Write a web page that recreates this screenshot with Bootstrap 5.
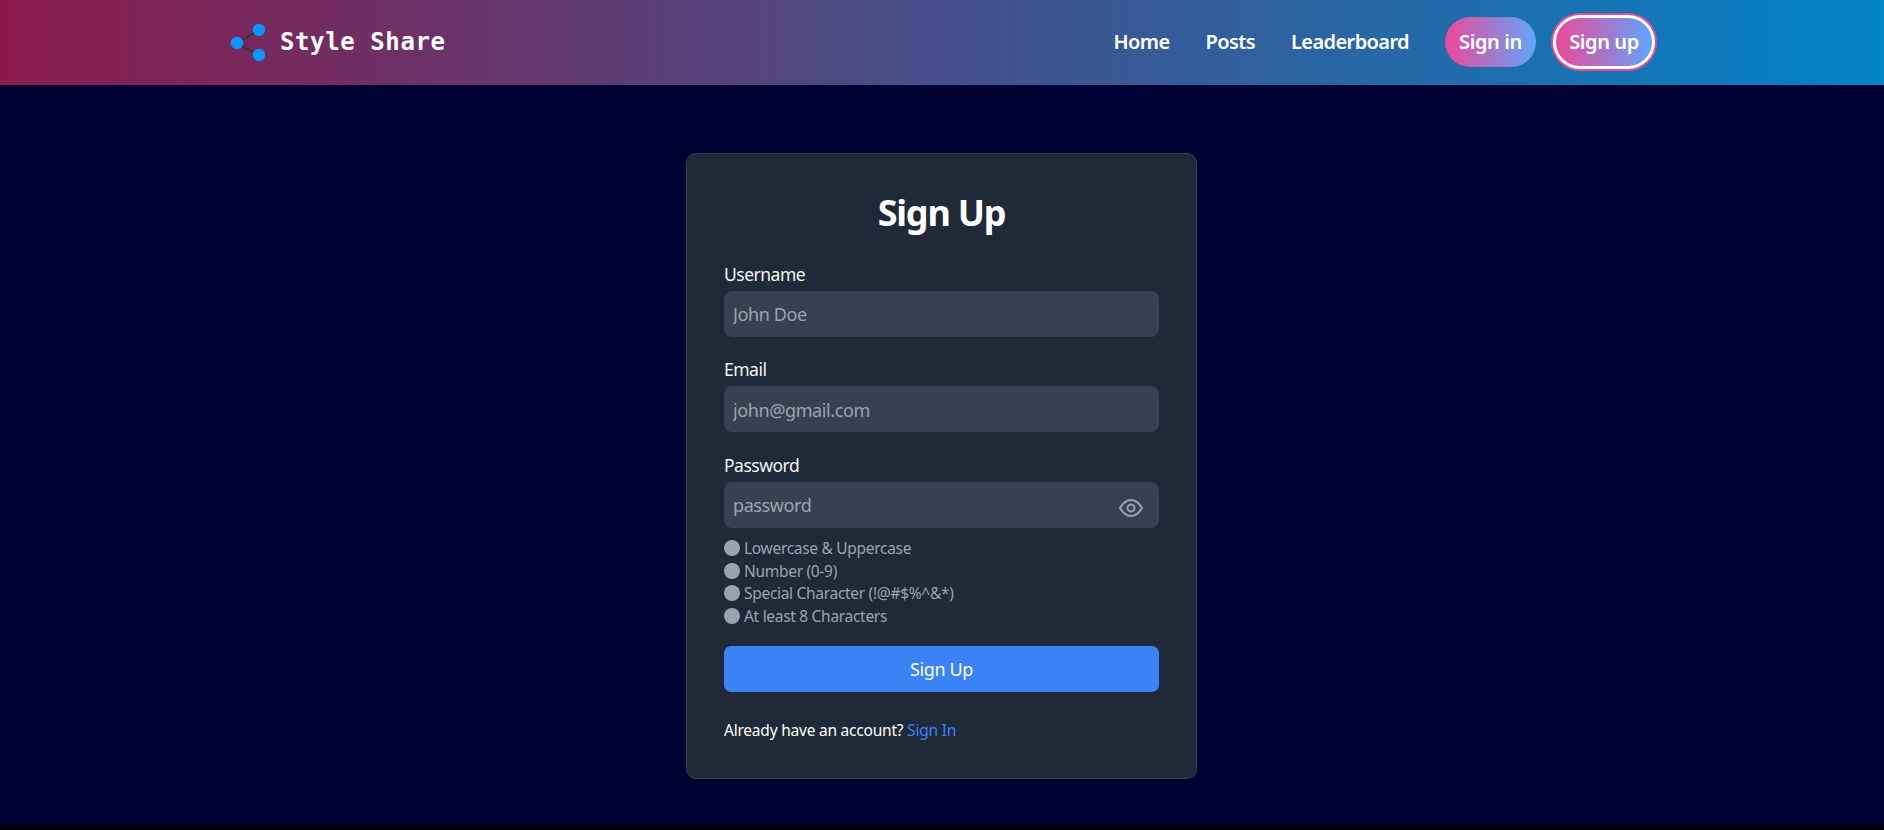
<!DOCTYPE html>
<html lang="en">
<head>
  <meta charset="UTF-8"/>
  <meta name="viewport" content="width=device-width, initial-scale=1.0"/>
  <title>Style Share - Sign Up</title>
  <link rel="stylesheet" href="https://cdn.jsdelivr.net/npm/bootstrap@5.3.0/dist/css/bootstrap.min.css"/>
  <style>
    html, body { background: #000; }
    body { font-family: "Noto Sans", "Liberation Sans", sans-serif; color: #fff; }
    .page-wrap { background: #000033; height: 825px; }
    .top-bar { height: 85px; padding: 0; background: linear-gradient(90deg, #8a1a4c, #0284c7); }
    .top-inner { width: 1430px; margin: 0 auto; padding-bottom: 2px; }
    .brand-link { color: #fff; text-decoration: none; font-family: "DejaVu Sans Mono", monospace; font-weight: 700; font-size: 24px; letter-spacing: .6px; gap: 10px; }
    .brand-link:hover { color: #fff; }
    .link-group { gap: 36px; margin-right: 36px; }
    .pill-group { gap: 17px; margin-right: 2px; }
    .top-link { color: #fff; text-decoration: none; font-size: 20px; font-weight: 600; letter-spacing: -.6px; }
    .pill-btn { color: #fff; text-decoration: none; font-size: 20px; font-weight: 600; letter-spacing: -.4px; border-radius: 25px; background: linear-gradient(90deg, #ec4899, #60a5fa); display: flex; align-items: center; justify-content: center; }
    .pill-in { width: 91px; height: 50px; }
    .pill-up { width: 102px; height: 54px; border: 3px solid #fff; border-radius: 29px; box-shadow: 0 0 0 2px #ec4899; }
    .form-area { padding: 68px 1px 0 0; }
    .form-box { width: 511px; background: #1f2937; border: 1px solid #374151; border-radius: 10px; padding: 32px 37px 35px; }
    .form-box h1 { font-size: 36px; font-weight: 700; letter-spacing: -1.2px; line-height: 54px; margin-bottom: 21.5px; }
    .field-label { font-size: 17.5px; letter-spacing: -.5px; line-height: 25px; margin-bottom: 4px; color: #f3f4f6; }
    .field-input { height: 46px; background: #374151; border: 0; border-radius: 8px; color: #fff; font-size: 18px; letter-spacing: -.4px; padding: 1px 9px 0; }
    .field-input::placeholder { color: #9ca3af; }
    .field-input:focus { background: #374151; color: #fff; box-shadow: none; }
    .field-gap { margin-bottom: 20.5px; }
    .pass-gap { margin-bottom: 9.5px; }
    .rule-list { margin-bottom: 19px; }
    .eye-btn { position: absolute; right: 16px; top: 15px; line-height: 0; }
    .rule-row { font-size: 15.5px; letter-spacing: -.3px; line-height: 22.6px; color: #9ca3af; gap: 4px; }
    .rule-dot { width: 16px; height: 16px; background: #9ca3af; border-radius: 50%; }
    .go-btn { height: 46px; background: #3b82f6; border: 0; border-radius: 7px; color: #fff; font-size: 18px; letter-spacing: -.4px; }
    .go-btn:hover { background: #3b82f6; color: #fff; }
    .foot-line { font-size: 15.5px; letter-spacing: -.22px; line-height: 24px; margin: 26px 0 .5px; }
    .foot-line a { color: #3b82f6; text-decoration: none; }
  </style>
</head>
<body>
  <div class="page-wrap">
    <nav class="navbar top-bar">
      <div class="top-inner d-flex align-items-center justify-content-between">
        <a class="brand-link d-flex align-items-center" href="#">
          <svg width="43" height="40" viewBox="0 0 43 40">
            <path d="M10 21 L32 8 M10 21 L32 33" stroke="#333" stroke-width="2" fill="none"/>
            <circle cx="10" cy="21" r="6.2" fill="#0a95ff"/>
            <circle cx="32" cy="8" r="6.2" fill="#0a95ff"/>
            <circle cx="32" cy="33" r="6.2" fill="#0a95ff"/>
          </svg>
          <span>Style Share</span>
        </a>
        <div class="d-flex align-items-center">
          <div class="link-group d-flex align-items-center">
            <a class="top-link" href="#">Home</a>
            <a class="top-link" href="#">Posts</a>
            <a class="top-link" href="#">Leaderboard</a>
          </div>
          <div class="pill-group d-flex align-items-center">
            <a class="pill-btn pill-in" href="#">Sign in</a>
            <a class="pill-btn pill-up" href="#">Sign up</a>
          </div>
        </div>
      </div>
    </nav>

    <div class="form-area d-flex justify-content-center">
      <form class="form-box">
        <h1 class="text-center">Sign Up</h1>
        <div class="field-gap">
          <label class="field-label d-block" for="username">Username</label>
          <input id="username" class="form-control field-input" type="text" placeholder="John Doe"/>
        </div>
        <div class="field-gap">
          <label class="field-label d-block" for="email">Email</label>
          <input id="email" class="form-control field-input" type="text" placeholder="john@gmail.com"/>
        </div>
        <div class="pass-gap">
          <label class="field-label d-block" for="password">Password</label>
          <div class="position-relative">
            <input id="password" class="form-control field-input" type="password" placeholder="password"/>
            <span class="eye-btn">
              <svg width="24" height="20" viewBox="0 0 24 20" fill="none" stroke="#9ca3af" stroke-width="2">
                <path d="M1 11 C4.500 5 8.500 3 12 3 C15.500 3 19.500 5 23 11 C19.500 17 15.500 19 12 19 C8.500 19 4.500 17 1 11 Z"/>
                <circle cx="12" cy="11" r="3.500"/>
              </svg>
            </span>
          </div>
        </div>
        <div class="rule-list">
          <div class="rule-row d-flex align-items-center"><span class="rule-dot"></span>Lowercase &amp; Uppercase</div>
          <div class="rule-row d-flex align-items-center"><span class="rule-dot"></span>Number (0-9)</div>
          <div class="rule-row d-flex align-items-center"><span class="rule-dot"></span>Special Character (!@#$%^&amp;*)</div>
          <div class="rule-row d-flex align-items-center"><span class="rule-dot"></span>At least 8 Characters</div>
        </div>
        <button type="button" class="btn go-btn w-100">Sign Up</button>
        <p class="foot-line">Already have an account? <a href="#">Sign In</a></p>
      </form>
    </div>
  </div>
  <script src="https://cdn.jsdelivr.net/npm/bootstrap@5.3.0/dist/js/bootstrap.bundle.min.js"></script>
</body>
</html>
